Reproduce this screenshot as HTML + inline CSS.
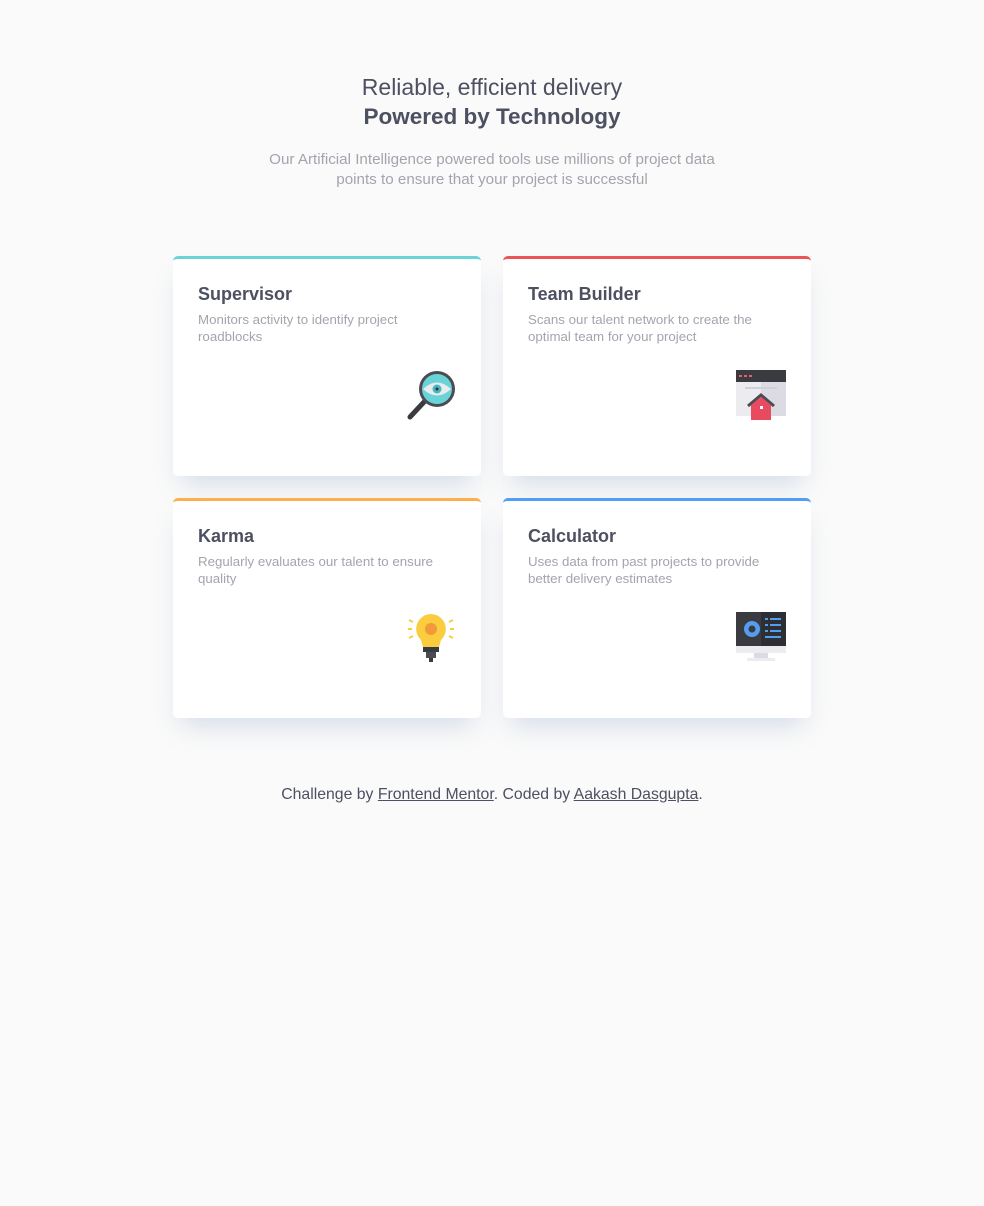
<!DOCTYPE html>
<html><head><style>
body{margin:0;background:#fafafa;font-family:"Liberation Sans",sans-serif;width:984px;height:1206px;position:relative;overflow:hidden}
.h1{position:absolute;top:74px;width:100%;text-align:center;font-size:23px;color:#4d5061;font-weight:300}
.h2{position:absolute;top:104px;width:100%;text-align:center;font-size:22.5px;color:#4d5061;font-weight:bold}
.p{position:absolute;top:150px;left:0;width:984px;text-align:center;font-size:15.2px;line-height:20px;color:#a3a5ae}
.card{position:absolute;width:308px;height:217px;background:#fff;border-radius:5px;border-top:3px solid;box-shadow:0 15px 25px -8px rgba(100,130,180,.25);box-sizing:content-box}
.card h3{margin:0;position:absolute;left:25px;top:25px;font-size:18px;color:#4d5061;font-weight:bold}
.card p{margin:0;position:absolute;left:25px;top:52px;width:260px;font-size:13.3px;line-height:17px;color:#a3a5ae}
.card svg{position:absolute;left:233px;top:111px}
.foot{position:absolute;top:786px;width:100%;text-align:center;font-size:15.8px;color:#4d5061}
.foot u{text-decoration:underline}
</style></head><body>
<div class="h1">Reliable, efficient delivery</div>
<div class="h2">Powered by Technology</div>
<div class="p">Our Artificial Intelligence powered tools use millions of project data<br>points to ensure that your project is successful</div>

<div class="card" style="left:173px;top:256px;border-color:#6ad3d8"><h3>Supervisor</h3><p>Monitors activity to identify project roadblocks</p>
<svg width="50" height="50" viewBox="0 0 50 50"><line x1="4" y1="47" x2="18" y2="32" stroke="#3a3b40" stroke-width="5" stroke-linecap="round"/><circle cx="31" cy="19" r="18" fill="#4a4c52"/><circle cx="31" cy="19" r="15" fill="#6ad3d8"/><path d="M17 19Q31 6 45 19Q31 32 17 19Z" fill="#e8ecee"/><circle cx="31" cy="19" r="4.5" fill="#49b5c0"/><circle cx="31" cy="19" r="1.5" fill="#333"/></svg></div>

<div class="card" style="left:503px;top:256px;border-color:#ea5454"><h3>Team Builder</h3><p>Scans our talent network to create the optimal team for your project</p>
<svg width="50" height="50" viewBox="0 0 50 50"><rect x="0" y="0" width="50" height="46" fill="#ecebf0"/><rect x="25" y="0" width="25" height="46" fill="#dcdbe3"/><rect x="0" y="0" width="50" height="12" fill="#3a3b40"/><rect x="3" y="5" width="3" height="2" fill="#ea5f6f"/><rect x="8" y="5" width="3" height="2" fill="#ea5f6f"/><rect x="13" y="5" width="3" height="2" fill="#ea5f6f"/><rect x="9" y="17" width="32" height="2" fill="#d0d0d8"/><path d="M12 36L25 25L38 36" stroke="#4a4c52" stroke-width="3" fill="none"/><path d="M15 35L25 27L35 35V50H15Z" fill="#e84a5f"/><rect x="24" y="36" width="3" height="3" fill="#fff"/></svg></div>

<div class="card" style="left:173px;top:498px;border-color:#fcaf4a"><h3>Karma</h3><p>Regularly evaluates our talent to ensure quality</p>
<svg width="50" height="50" viewBox="0 0 50 50"><path d="M25 2a15 15 0 0 0-10 26l2 7h16l2-7A15 15 0 0 0 25 2z" fill="#f9cd3d"/><circle cx="25" cy="17" r="6" fill="#f2993c"/><path d="M17 35h16v5H17z" fill="#3a3b40"/><path d="M20 40h10v6H20z" fill="#4a4c52"/><path d="M23 46h4v4h-4z" fill="#3a3b40"/><g stroke="#f9cd3d" stroke-width="2"><path d="M2 17h4M44 17h4M3 8l4 2M47 8l-4 2M3 26l4-2M47 26l-4-2"/></g></svg></div>

<div class="card" style="left:503px;top:498px;border-color:#549ef2"><h3>Calculator</h3><p>Uses data from past projects to provide better delivery estimates</p>
<svg width="50" height="50" viewBox="0 0 50 50"><rect x="0" y="0" width="50" height="34" fill="#3a3b40"/><rect x="25" y="0" width="25" height="34" fill="#2e2f34"/><rect x="0" y="34" width="50" height="7" fill="#ecebf0"/><rect x="18" y="41" width="14" height="5" fill="#dcdbe3"/><rect x="11" y="46" width="28" height="3" fill="#ecebf0"/><circle cx="16" cy="17" r="8" fill="#549ef2"/><circle cx="16" cy="17" r="3.5" fill="#3a3b40"/><g fill="#549ef2"><rect x="29" y="6" width="3" height="2"/><rect x="34" y="6" width="11" height="2"/><rect x="29" y="12" width="3" height="2"/><rect x="34" y="12" width="11" height="2"/><rect x="29" y="18" width="3" height="2"/><rect x="34" y="18" width="11" height="2"/><rect x="29" y="24" width="16" height="2"/></g></svg></div>

<div class="foot">Challenge by <u>Frontend Mentor</u>. Coded by <u>Aakash Dasgupta</u>.</div>
</body></html>
